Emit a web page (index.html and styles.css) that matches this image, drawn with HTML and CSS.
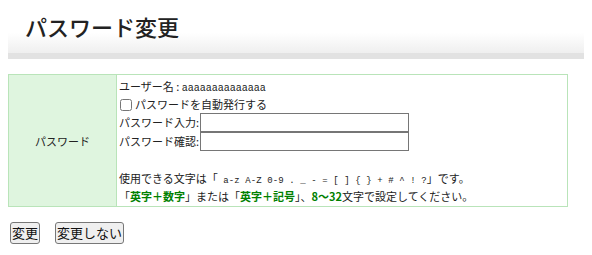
FILE: index.html
```html
<!DOCTYPE html>
<html lang="ja">
<head>
    <meta charset="UTF-8">
    <title>パスワード変更</title>
    <link rel="stylesheet" href="styles.css">
</head>
<body>
    <div class="page-head">
        <h1>パスワード変更</h1>
    </div>

    <form onsubmit="return false;">
        <table class="form-table">
            <tr>
                <th>パスワード</th>
                <td>
                    <div class="line">ユーザー名 : <span class="mono">aaaaaaaaaaaaaa</span></div>
                    <div class="line"><label><input type="checkbox" class="chk">パスワードを自動発行する</label></div>
                    <div class="line field">パスワード入力:<input type="password" class="pw"></div>
                    <div class="line field">パスワード確認:<input type="password" class="pw"></div>
                    <div class="line"></div>
                    <div class="line">使用できる文字は「<span class="mono chars"> a-z A-Z 0-9 . _ - = [ ] { } + # ^ ! ?</span>」です。</div>
                    <div class="line">「<b class="hl">英字＋数字</b>」または「<b class="hl">英字＋記号</b>」、<b class="hl">8〜32</b>文字で設定してください。</div>
                </td>
            </tr>
        </table>
        <div class="actions">
            <button type="submit" class="btn">変更</button>
            <button type="button" class="btn">変更しない</button>
        </div>
    </form>
</body>
</html>
```

FILE: styles.css
```css
body { margin: 8px; font-family: "Noto Sans CJK JP", "Liberation Sans", sans-serif; font-size: 11px; color: #222; background: #fff; }

.page-head { width: 577px; height: 45px; background: linear-gradient(#fff 0%, #fff 55%, #efefef 100%); border-bottom: 6px solid #e2e2e2; }
.page-head h1 { margin: 0; padding: 3px 0 0 17px; font-size: 22px; line-height: 30px; font-weight: 500; color: #222; }

form { margin-top: 15px; }
.form-table { width: 560px; border-collapse: collapse; }
.form-table th, .form-table td { border: 1px solid #b9e4b9; }
.form-table th { width: 107px; background: #dff5df; font-weight: normal; text-align: center; vertical-align: middle; padding: 0; }
.form-table td { padding: 2px 2px 1px 2px; vertical-align: top; }

.line { height: 18px; line-height: 18px; white-space: nowrap; }
.field { height: 19px; line-height: 19px; display: flex; align-items: center; }
.chk { width: 12px; height: 12px; margin: 0 3px 0 1px; vertical-align: -2px; }
.pw { width: 209px; height: 19px; margin: 0 0 0 1px; padding: 0 2px; border: 1px solid #767676; box-sizing: border-box; font-size: 12px; }
.mono { font-family: "Liberation Mono", monospace; font-size: 10px; }
.chars { font-size: 9px; letter-spacing: 0.1px; }
.hl { color: #008000; font-weight: bold; }

.actions { margin-top: 15px; padding-left: 2px; display: flex; gap: 15px; }
.btn { font-family: inherit; font-size: 13px; height: 22px; padding: 0 1px; line-height: 18px; border: 1px solid #777; border-radius: 3px; background: #efefef; color: #111; }
```
